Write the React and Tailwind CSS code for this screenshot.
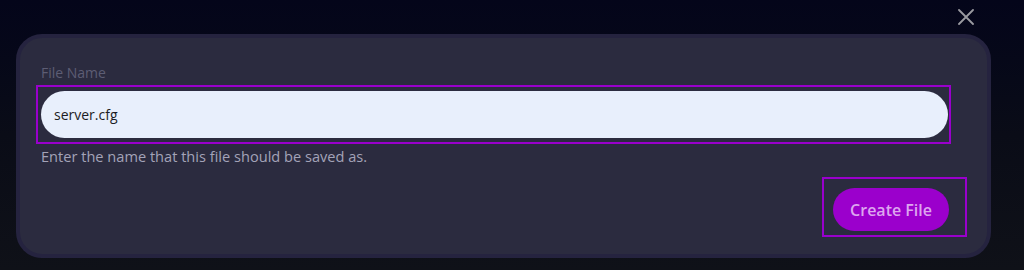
import React, { useState } from "react";

const font = { fontFamily: '"Open Sans", "Noto Sans", sans-serif' };

const CloseIcon = () => (
  <svg width="16" height="16" viewBox="0 0 16 16" fill="none">
    <path d="M1 1L15 15M15 1L1 15" stroke="#9a9aa0" strokeWidth="1.8" strokeLinecap="round" />
  </svg>
);

export default function App() {
  const [name, setName] = useState("server.cfg");

  return (
    <div
      className="h-[270px] w-[1024px] overflow-hidden bg-gradient-to-b from-[#04051a] via-[#0a0c17] to-[#0f1118] flex flex-col"
      style={font}
    >
      {/* close button row */}
      <div className="h-[34px] flex justify-end items-start pr-[50px] pt-[9px]">
        <button className="w-4 h-4 flex items-center justify-center">
          <CloseIcon />
        </button>
      </div>

      {/* modal card */}
      <div className="mx-[16px] mr-[33px] h-[224px] rounded-[26px] border-4 border-[#25233f] bg-[#2b2b3f] px-[21px] pt-[25px] flex flex-col">
        <label className="text-[14px] leading-[20px] text-[#5d5d74]">File Name</label>

        <div className="mt-[2px] -ml-[5px] mr-[15px] border-2 border-[#9900cc] pl-[3px] pr-[1px] pt-[4px] pb-[4px]">
          <input
            value={name}
            onChange={(e) => setName(e.target.value)}
            className="w-full h-[47px] rounded-full bg-[#e8effc] px-[13px] text-[14px] text-[#1c1c24] outline-none"
            style={font}
          />
        </div>

        <p className="mt-[2px] text-[14.6px] leading-[20px] text-[#a3a3b8]">
          Enter the name that this file should be saved as.
        </p>

        <div className="flex justify-end mt-[11px] -mr-[1px]">
          <div className="border-2 border-[#9900cc] pl-[9px] pr-[16px] pt-[9px] pb-[4px]">
            <button className="h-[43px] px-[17px] rounded-full bg-[#9b00cc] text-[16px] font-semibold text-[#dda6ef]">
              Create File
            </button>
          </div>
        </div>
      </div>
    </div>
  );
}
